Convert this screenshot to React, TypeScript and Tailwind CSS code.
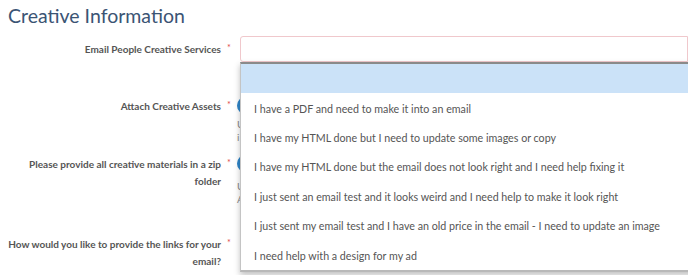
import React from 'react';

const options = [
  '',
  'I have a PDF and need to make it into an email',
  'I have my HTML done but I need to update some images or copy',
  'I have my HTML done but the email does not look right and I need help fixing it',
  'I just sent an email test and it looks weird and I need help to make it look right',
  'I just sent my email test and I have an old price in the email - I need to update an image',
  'I need help with a design for my ad',
];

const Label: React.FC<{ lines: string[] }> = ({ lines }) => (
  <div className="w-[231px] shrink-0 flex justify-end">
    <div className="text-right text-[10px] font-bold leading-[17px] text-[#555]">
      {lines.map((l, i) => (
        <div key={i}>{l}</div>
      ))}
    </div>
    <span className="w-[10px] pl-[6px] text-[9px] leading-[14px] text-[#e04848]">*</span>
  </div>
);

export default function App() {
  return (
    <div className="relative w-[688px] h-[275px] overflow-hidden bg-white font-['Lato','Open_Sans',sans-serif]">
      <h2 className="pl-[8px] pt-[3px] text-[19.5px] leading-[26px] text-[#3b5474]">Creative Information</h2>

      {/* Email People Creative Services */}
      <div className="flex items-center mt-[7px] h-[26px]">
        <Label lines={['Email People Creative Services']} />
        <div className="ml-[9px] flex-1 h-[26px] border border-[#f0c8cc] rounded-l-[3px] bg-white" />
      </div>

      {/* Attach Creative Assets */}
      <div className="flex mt-[36px]">
        <Label lines={['Attach Creative Assets']} />
        <div className="ml-[6px] flex flex-col">
          <div className="w-[17px] h-[17px] rounded-full bg-[#2f86c9] -mt-[1px]" />
          <div className="mt-[4px] text-[10px] leading-[13px] text-[#888]">U</div>
          <div className="text-[10px] leading-[13px] text-[#888]">i</div>
        </div>
      </div>

      {/* zip folder */}
      <div className="flex mt-[12px]">
        <Label lines={['Please provide all creative materials in a zip', 'folder']} />
        <div className="ml-[6px] flex flex-col">
          <div className="w-[17px] h-[17px] rounded-full bg-[#2f86c9] -mt-[1px]" />
          <div className="mt-[8px] text-[10px] leading-[13px] text-[#888]">U</div>
          <div className="text-[10px] leading-[13px] text-[#888]">A</div>
        </div>
      </div>

      {/* links */}
      <div className="flex mt-[30px]">
        <Label lines={['How would you like to provide the links for your', 'email?']} />
      </div>

      {/* open dropdown list */}
      <div className="absolute left-[240px] top-[62px] w-[470px] bg-white border-l border-[#c4c4c4] border-t-2 border-t-[#8a8a8a] border-b-2 border-b-[#b8b8b8] shadow-[0_3px_6px_rgba(0,0,0,0.25)]">
        {options.map((o, i) => (
          <div
            key={i}
            className={`h-[29.4px] flex items-center pl-[13px] text-[10.7px] text-[#555] whitespace-nowrap ${i === 0 ? 'bg-[#cbe2f8]' : 'pt-[1px]'}`}
          >
            {o}
          </div>
        ))}
      </div>
    </div>
  );
}
